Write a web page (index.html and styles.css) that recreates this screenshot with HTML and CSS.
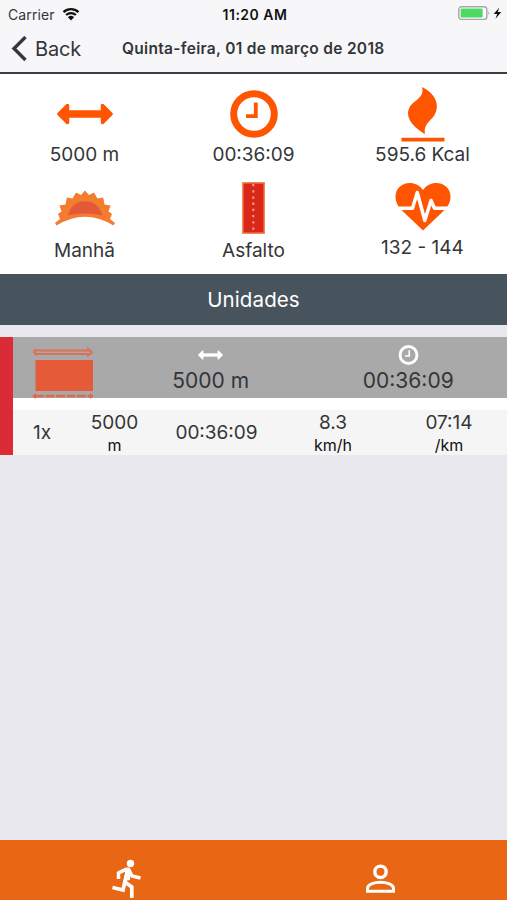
FILE: index.html
```html
<!doctype html>
<html lang="pt">
  <head>
    <meta charset="UTF-8" />
    <meta name="viewport" content="width=device-width, initial-scale=1.0" />
    <title>Treino</title>
    <link rel="stylesheet" href="styles.css">
  </head>
  <body>
    <!-- Shared icons -->
    <svg class="sprite" width="0" height="0">
      <symbol id="icon-distance" viewBox="0 0 56 22">
        <path d="M2 11 10.500 2.500V19.500ZM54 11 45.500 2.500V19.500Z" fill="currentColor" stroke="currentColor" stroke-width="3.5" stroke-linejoin="round" />
        <path d="M10 7.3h36v7.4H10z" fill="currentColor" />
      </symbol>
      <symbol id="icon-clock" viewBox="0 0 48 48">
        <circle cx="24" cy="24" r="20.3" fill="none" stroke="currentColor" stroke-width="7" />
        <path d="M25.8 12.5V26.2H16" fill="none" stroke="currentColor" stroke-width="3.8" />
      </symbol>
    </svg>

    <div class="status-bar">
      <div class="carrier">
        <span>Carrier</span>
        <svg width="18" height="14" viewBox="0 0 18 14">
          <path d="M1.5 5.1a11.2 11.2 0 0 1 15 0M4.1 8a7.3 7.3 0 0 1 9.8 0" fill="none" stroke="#111" stroke-width="2.3" />
          <path d="M9 13.4 5.9 10.3a4.5 4.5 0 0 1 6.2 0z" fill="#111" />
        </svg>
      </div>
      <strong class="time">11:20 AM</strong>
      <div class="battery">
        <svg width="44" height="16" viewBox="0 0 44 16">
          <rect x="0.8" y="0.8" width="28" height="12.6" rx="2.8" fill="#fff" stroke="#a5a5a9" stroke-width="1.4" />
          <rect x="2.6" y="2.6" width="22" height="9" rx="1" fill="#4cd964" />
          <path d="M30.3 5.2q2 1.9 0 3.8z" fill="#a5a5a9" />
          <path d="M41.3 1.5 35.7 8h3.5l-1.7 4.8L43.3 6h-3.6z" fill="#111" />
        </svg>
      </div>
    </div>

    <header class="nav-bar">
      <a class="back">
        <svg width="17" height="26" viewBox="0 0 17 26">
          <path d="M14.5 1 3 12.500l11.500 11.500" fill="none" stroke="#33383c" stroke-width="3.4" />
        </svg>
        <span>Back</span>
      </a>
      <h1>Quinta-feira, 01 de março de 2018</h1>
    </header>

    <section class="summary">
      <div class="metric">
        <div class="metric-icon">
          <svg width="56" height="22"><use href="#icon-distance" /></svg>
        </div>
        <span>5000 m</span>
      </div>
      <div class="metric">
        <div class="metric-icon">
          <svg width="48" height="48"><use href="#icon-clock" /></svg>
        </div>
        <span>00:36:09</span>
      </div>
      <div class="metric">
        <div class="metric-icon">
          <svg width="44" height="56" viewBox="0 0 44 56">
            <path d="M21 1C34 7 39.500 19 33.500 29C30 35 22 38 24 48C12 41 3.500 31 8.500 21.500C13 13.500 24 12 21 1Z" fill="currentColor" />
            <path d="M.5 51.7h43v3.8H.5z" fill="currentColor" />
          </svg>
        </div>
        <span>595.6 Kcal</span>
      </div>

      <div class="metric">
        <div class="metric-icon">
          <svg width="62" height="38" viewBox="0 0 62 38">
            <path d="M1 34 6 30 4 25 7.500 22.500 5.500 16.500 11.500 15.500 12.800 8.500 18.500 9.500 22 3.500 27 6 31 1.500 35 6 40 3.500 43.500 9.500 49.200 8.500 50.500 15.500 56.500 16.500 54.500 22.500 58 25 56 30 61 34 59.500 36.500Q31 19 2.500 36.500Z" fill="#f47b30" />
            <path d="M14 26.500Q18 12.300 31 12.300Q44 12.300 48.500 26.500Q31 22.500 14 26.500Z" fill="#e45a38" />
            <path d="M11 26Q15 9.500 31 9.500Q47 9.500 51 26" fill="none" stroke="#ef8428" stroke-width="1.500" />
          </svg>
        </div>
        <span>Manhã</span>
      </div>
      <div class="metric">
        <div class="metric-icon">
          <svg width="23" height="52" viewBox="0 0 23 52">
            <rect x=".75" y=".75" width="21.5" height="50.5" fill="#d92818" stroke="#f48a55" stroke-width="1.5" />
            <path d="M11.3 2V50" stroke="#f3a08c" stroke-width="2" stroke-dasharray="2.3 3.9" />
          </svg>
        </div>
        <span>Asfalto</span>
      </div>
      <div class="metric metric-heart">
        <div class="metric-icon">
          <svg width="56" height="49" viewBox="0 0 56 49">
            <path d="M28 48.500 6.500 28C-1 21-1.500 10 5 4.500C12-1.500 23 .5 28 8C33 .5 44-1.500 51 4.500C57.500 10 57 21 49.500 28Z" fill="currentColor" />
            <path d="M3 26.300H17.500L22.300 10.500 29.800 38.500 36 18.500 39.500 26.300H53" fill="none" stroke="#fff" stroke-width="3.500" stroke-linejoin="round" />
          </svg>
        </div>
        <span>132 - 144</span>
      </div>
    </section>

    <h2 class="section-title">Unidades</h2>

    <section class="unit">
      <div class="unit-header">
        <div class="unit-type">
          <svg width="63" height="53" viewBox="0 0 63 53">
            <path d="M3 3.500H58M3 7H58" fill="none" stroke="#df7055" stroke-width="2" />
            <path d="M3.500 2 2 5l3 3.500M55 1l5 4.200-5 4" fill="none" stroke="#df7055" stroke-width="2" />
            <path d="M3.500 13h57.500v31H3.500z" fill="#e55a38" />
            <path d="M3 49H61" stroke="#e2694c" stroke-width="2.700" stroke-dasharray="9 1.500" />
            <path d="M4 46 0 49l4 3M58 46l3 3-3 3" fill="#e2694c" />
          </svg>
        </div>
        <div class="unit-total">
          <svg width="25" height="20" viewBox="0 0 56 22"><use href="#icon-distance" /></svg>
          <span>5000 m</span>
        </div>
        <div class="unit-total">
          <svg width="21" height="21"><use href="#icon-clock" /></svg>
          <span>00:36:09</span>
        </div>
      </div>
      <div class="unit-row">
        <div>1x</div>
        <div>5000<small>m</small></div>
        <div>00:36:09</div>
        <div>8.3<small>km/h</small></div>
        <div>07:14<small>/km</small></div>
      </div>
    </section>

    <nav class="tab-bar">
      <a class="tab">
        <svg width="30" height="40" viewBox="0 0 30 40">
          <circle cx="18.500" cy="4.500" r="3.700" fill="#fff" />
          <path d="M6.500 20V13.800L14 10.300H16.500L20 17 28.500 19" fill="none" stroke="#fff" stroke-width="3.500" stroke-linejoin="round" />
          <path d="M13.500 9.500 18.500 10 18 21 12.500 22Z" fill="#fff" />
          <path d="M15.300 12 12.800 23 19.800 28V39M13 22 11 31 .5 28.500" fill="none" stroke="#fff" stroke-width="3.700" />
        </svg>
      </a>
      <a class="tab">
        <svg width="30" height="30" viewBox="0 0 30 30">
          <circle cx="15.500" cy="7.800" r="5.700" fill="none" stroke="#fff" stroke-width="3.400" />
          <path d="M2.500 27.300V24.500C2.500 20.500 9 18.300 15.500 18.300S28.500 20.500 28.500 24.500V27.300Z" fill="none" stroke="#fff" stroke-width="3" />
        </svg>
      </a>
    </nav>
  </body>
</html>
```
FILE: styles.css
```css
:root {
  --orange: #ff5500;
  --tab-orange: #e96615;
  --red: #db2b36;
  --slate: #47545d;
  --text: #333538;
}

* {
  box-sizing: border-box;
}

body {
  display: flex;
  flex-direction: column;
  height: 100vh;
  margin: 0;
  overflow: hidden;
  background: #e9e8ef;
  color: var(--text);
  font-family: Inter, 'Liberation Sans', sans-serif;
  font-size: 19px;
}

svg {
  display: block;
  flex: none;
}

.sprite {
  position: absolute;
}

.status-bar {
  display: grid;
  grid-template-columns: 1fr auto 1fr;
  align-items: center;
  height: 27px;
  padding: 0 5px 0 8px;
  background: #f7f7f9;
  font-size: 14px;
  line-height: 27px;
}

.carrier {
  display: flex;
  align-items: center;
  gap: 7px;
  letter-spacing: 0.1px;
}

.time {
  padding-top: 1px;
  color: #111;
  font-weight: 600;
  font-size: 14px;
  letter-spacing: 0.5px;
}

.battery {
  display: flex;
  justify-content: flex-end;
}

.nav-bar {
  display: flex;
  align-items: center;
  height: 47px;
  padding: 0 0 1px 11px;
  background: #f7f7f9;
  border-bottom: 2px solid #3c3f42;
}

.back {
  display: flex;
  align-items: center;
  gap: 7px;
  width: 111px;
  font-size: 20px;
  letter-spacing: -0.2px;
}

.nav-bar h1 {
  margin: 0;
  padding-bottom: 1px;
  font-size: 15.5px;
  font-weight: 600;
  letter-spacing: 0.3px;
  white-space: nowrap;
}

/* Workout summary */
.summary {
  display: grid;
  grid-template-columns: repeat(3, 1fr);
  grid-template-rows: 92px 1fr;
  height: 200px;
  padding-top: 12px;
  background: #fff;
}

.metric {
  display: flex;
  flex-direction: column;
  align-items: center;
  line-height: 25px;
}

.metric-icon {
  display: flex;
  align-items: center;
  justify-content: center;
  height: 56px;
  color: var(--orange);
}

.metric:nth-child(n + 4) .metric-icon {
  height: 60px;
}

.metric.metric-heart .metric-icon {
  height: 57px;
}

.section-title {
  height: 51px;
  margin: 0;
  background: var(--slate);
  color: #fff;
  font-size: 20.5px;
  font-weight: 400;
  letter-spacing: 0.1px;
  line-height: 52px;
  text-align: center;
}

/* Unit card */
.unit {
  margin-top: 12px;
  border-left: 13px solid var(--red);
  background: #fff;
}

.unit-header {
  display: grid;
  grid-template-columns: 99px 1fr 1fr;
  height: 61px;
  background: #a9a9a9;
}

.unit-type {
  padding: 10px 0 0 19px;
}

.unit-total {
  display: flex;
  flex-direction: column;
  align-items: center;
  padding-top: 8px;
  font-size: 21px;
  line-height: 32px;
}

.unit-total svg {
  height: 20px;
  color: #fff;
}

.unit-row {
  display: grid;
  grid-template-columns: 58px 87px 117px 116px 116px;
  align-items: center;
  height: 45px;
  margin-top: 12px;
  padding-top: 1px;
  background: #f5f5f5;
  line-height: 24px;
  text-align: center;
}

.unit-row small {
  display: block;
  color: #111;
  font-size: 16px;
  line-height: 20px;
}

.tab-bar {
  display: grid;
  grid-template-columns: 1fr 1fr;
  height: 60px;
  margin-top: auto;
  background: var(--tab-orange);
}

.tab {
  display: flex;
  justify-content: center;
  padding-top: 19px;
}

.tab + .tab {
  padding-top: 24px;
}
```
